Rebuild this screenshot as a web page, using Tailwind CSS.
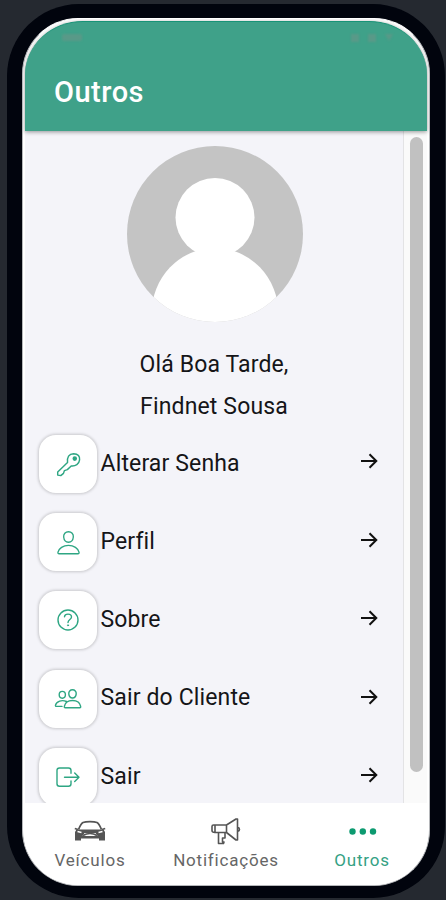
<!DOCTYPE html>
<html lang="pt">
<head>
<meta charset="utf-8">
<title>Outros</title>
<script src="https://cdn.jsdelivr.net/npm/@tailwindcss/browser@4"></script>
</head>
<body class="w-[446px] h-[900px] overflow-hidden bg-[#252930] font-['Roboto','Liberation_Sans',sans-serif]">
<div class="ml-[7px] pt-[4px]">
<div class="w-[438px] h-[894px] rounded-[72px] bg-[#01040d] pt-[14px] pl-[15px]">
<div class="w-[408px] h-[868px] rounded-[56px] bg-white border border-[#b5b7ba] border-t-white overflow-hidden pl-[2px] pr-[2px] pt-[2px] flex flex-col">
  <header class="relative z-10 h-[110px] shrink-0 bg-[#3fa189] border-t border-[#189377] rounded-tl-[58px_54px] rounded-tr-[58px_54px] shadow-[0_1px_4px_rgba(0,0,0,0.4)] flex flex-col">
    <div class="h-[30px] pt-[12px] pl-[37px] pr-[34px] flex justify-between items-start">
      <span class="w-[20px] h-[7px] rounded-[2px] bg-[#6b9487]/60 blur-[1px]"></span>
      <span class="flex gap-[9px] blur-[1px]">
        <span class="w-[8px] h-[8px] bg-[#6b9487]/60"></span>
        <span class="w-[8px] h-[8px] bg-[#6b9487]/60"></span>
        <span class="w-[8px] h-[7px] bg-[#6b9487]/60 [clip-path:polygon(0_0,100%_0,50%_100%)]"></span>
      </span>
    </div>
    <h1 class="pl-[29px] pt-[23px] text-[29px] leading-[34px] tracking-[0.5px] font-medium text-white whitespace-nowrap">Outros</h1>
  </header>
  <div class="h-[672px] shrink-0 flex bg-[#f4f4f9] overflow-hidden">
    <main class="w-[378px] shrink-0 text-[#151518] text-[23px] tracking-[0.14px]">
      <div class="flex flex-col items-center pt-[15px]">
        <svg class="w-[176px] h-[176px] ml-[2px]" viewBox="0 0 176 176">
          <clipPath id="c"><circle cx="88" cy="88" r="88"/></clipPath>
          <g clip-path="url(#c)"><rect width="176" height="176" fill="#c4c4c4"/><circle cx="88" cy="71.500" r="39.500" fill="#fff"/><ellipse cx="88" cy="168" rx="63.500" ry="66" fill="#fff"/></g>
        </svg>
        <p class="mt-[22px] leading-[42px] whitespace-nowrap">Olá Boa Tarde,</p>
        <p class="leading-[42px] whitespace-nowrap">Findnet Sousa</p>
      </div>
      <ul class="pt-[7px] pl-[14px] pr-[25px] flex flex-col gap-[20.2px]">
        <li class="flex items-center h-[58px]">
          <span class="w-[58px] h-[58px] rounded-[17px] bg-white shadow-[0_0_3px_1px_rgba(0,0,0,0.18)] flex items-center justify-center"><svg class="w-[27px] h-[27px]" viewBox="0 0 28 28" fill="none" stroke="#2ea683" stroke-width="1.500" stroke-linejoin="round"><path d="M13 12C12.300 6.500 14.500 3 19.300 2.800C24 2.800 26 5.500 25.500 9.300C25 13.500 21.300 16 16.800 15.500L12.800 19.300L9.800 20.300L8.800 23.200L6 25.500L2.800 25L2.800 21.800Z"/><circle cx="20.500" cy="7.900" r="1.600" fill="#2ea683"/></svg></span>
          <span class="ml-[3.500px] flex-1 whitespace-nowrap">Alterar Senha</span>
          <svg class="w-[18px] h-[18px] relative -top-[3px]" viewBox="0 0 18 18" fill="none" stroke="#111" stroke-width="2"><path d="M1 9H16M9.500 2.200L16.300 9L9.500 15.800"/></svg>
        </li>
        <li class="flex items-center h-[58px]">
          <span class="w-[58px] h-[58px] rounded-[17px] bg-white shadow-[0_0_3px_1px_rgba(0,0,0,0.18)] flex items-center justify-center"><svg class="w-[27px] h-[27px]" viewBox="0 0 28 28" fill="none" stroke="#2ea683" stroke-width="1.400" stroke-linejoin="round"><path d="M14 2.800C17.200 2.800 19.300 5.300 19 8.300C18.700 11.400 16.600 13.700 14 13.700C11.400 13.700 9.300 11.400 9 8.300C8.700 5.300 10.800 2.800 14 2.800Z"/><path d="M14 17C8.500 17 4 20 3.100 24C2.900 25 3.300 25.700 4.200 25.700H23.800C24.700 25.700 25.100 25 24.900 24C24 20 19.500 17 14 17Z"/></svg></span>
          <span class="ml-[3.500px] flex-1 whitespace-nowrap">Perfil</span>
          <svg class="w-[18px] h-[18px] relative -top-[2px]" viewBox="0 0 18 18" fill="none" stroke="#111" stroke-width="2"><path d="M1 9H16M9.500 2.200L16.300 9L9.500 15.800"/></svg>
        </li>
        <li class="flex items-center h-[58px]">
          <span class="w-[58px] h-[58px] rounded-[17px] bg-white shadow-[0_0_3px_1px_rgba(0,0,0,0.18)] flex items-center justify-center"><svg class="w-[28px] h-[28px]" viewBox="0 0 28 28" fill="none" stroke="#2ea683" stroke-width="1.400" stroke-linecap="round"><circle cx="14" cy="14" r="10"/><path d="M10.500 10.700C10.700 8.800 12.200 8.100 14 8.100C16 8.100 17.500 9.300 17.500 11C17.500 13.600 14 13.500 14 16.500"/><circle cx="14" cy="19.300" r=".6" fill="#2ea683" stroke-width=".8"/></svg></span>
          <span class="ml-[3.500px] flex-1 whitespace-nowrap">Sobre</span>
          <svg class="w-[18px] h-[18px] relative -top-[2px]" viewBox="0 0 18 18" fill="none" stroke="#111" stroke-width="2"><path d="M1 9H16M9.500 2.200L16.300 9L9.500 15.800"/></svg>
        </li>
        <li class="flex items-center h-[58px]">
          <span class="w-[58px] h-[58px] rounded-[17px] bg-white shadow-[0_0_3px_1px_rgba(0,0,0,0.18)] flex items-center justify-center"><svg class="w-[28px] h-[28px]" viewBox="0 0 28 28" fill="none" stroke="#2ea683" stroke-width="1.400" stroke-linejoin="round" stroke-linecap="round"><path d="M18.500 4.800C20.800 4.800 22.400 6.500 22.200 8.900C22 11.300 20.400 13 18.500 13C16.600 13 15 11.300 14.800 8.900C14.600 6.500 16.200 4.800 18.500 4.800Z"/><path d="M18.500 15.500C14.500 15.500 11 17.700 10.300 21.500C10.100 22.300 10.500 22.800 11.200 22.800H25.800C26.500 22.800 26.900 22.300 26.700 21.500C26 17.700 22.500 15.500 18.500 15.500Z"/><ellipse cx="8.300" cy="9.800" rx="3.100" ry="3.400"/><path d="M12.500 16.500C8 14.600 2.500 16 1.500 20.200C1.300 21 1.700 21.400 2.300 21.400H8"/></svg></span>
          <span class="ml-[3.500px] flex-1 whitespace-nowrap">Sair do Cliente</span>
          <svg class="w-[18px] h-[18px] relative -top-[2px]" viewBox="0 0 18 18" fill="none" stroke="#111" stroke-width="2"><path d="M1 9H16M9.500 2.200L16.300 9L9.500 15.800"/></svg>
        </li>
        <li class="flex items-center h-[58px]">
          <span class="w-[58px] h-[58px] rounded-[17px] bg-white shadow-[0_0_3px_1px_rgba(0,0,0,0.18)] flex items-center justify-center"><svg class="w-[28px] h-[28px]" viewBox="0 0 28 28" fill="none" stroke="#2ea683" stroke-width="1.400" stroke-linejoin="round" stroke-linecap="round"><path d="M17 10.300V7.500C17 6 16 5 14.500 5H5.500C4 5 3 6 3 7.500V20.800C3 22.300 4 23.300 5.500 23.300H14.500C16 23.300 17 22.300 17 20.800V18"/><path d="M10.500 14.200H25M20.700 9.900L25 14.200L20.700 18.500"/></svg></span>
          <span class="ml-[3.500px] flex-1 whitespace-nowrap">Sair</span>
          <svg class="w-[18px] h-[18px] relative -top-[2px]" viewBox="0 0 18 18" fill="none" stroke="#111" stroke-width="2"><path d="M1 9H16M9.500 2.200L16.300 9L9.500 15.800"/></svg>
        </li>
      </ul>
    </main>
    <aside class="flex-1 bg-[#fafafa] border-l border-[#e3e3e5] pt-[6px] pl-[6px]"><div class="w-[13px] h-[635px] rounded-full bg-[#c1c1c1]"></div></aside>
  </div>
  <nav class="flex-1 bg-white flex text-[17px] leading-[20px] tracking-[0.8px] text-[#666]">
    <div class="w-[130px] flex flex-col items-center pt-[14px]">
      <svg class="w-[32px] h-[28px]" viewBox="0 0 32 28" fill="none" stroke="#555" stroke-width="1.700" stroke-linejoin="round"><path d="M4.500 12.500C6 9 7 6.500 9 5.500C12 4.300 20 4.300 23 5.500C25 6.500 26 9 27.500 12.500"/><path d="M2.500 12.500H29.500L31 15V23.500H25V21.500H7V23.500H1V15ZM8.500 19H23.500L21.500 16H10.500Z" fill="#555" fill-rule="evenodd" stroke="none"/><path d="M3.500 14.500L7.500 15.500M28.500 14.500L24.500 15.500" stroke="#fff" stroke-width="1.300"/><path d="M.8 11.500L4 12.500M31.200 11.500L28 12.500M9 18.500Q16 14.500 23 18.500"/></svg>
      <span class="whitespace-nowrap mt-[5px]">Veículos</span>
    </div>
    <div class="w-[142px] flex flex-col items-center pt-[14px]">
      <svg class="w-[32px] h-[28px]" viewBox="0 0 32 28" fill="none" stroke="#555" stroke-width="1.600" stroke-linejoin="round"><path d="M5 8H16.500V15.500H5ZM5 8H3.500Q2 8 2 9.500V13.500Q2 15.500 5 15.500M16.500 8L26 2H27.500V23H26L16.500 15.500M27.500 10Q29.500 10.500 29.500 12.500Q29.500 14 27.500 14.500M8.500 15.500V26.500H13.500L14 25H12.500V21H15V15.500"/></svg>
      <span class="whitespace-nowrap mt-[5px]">Notificações</span>
    </div>
    <div class="flex-1 flex flex-col items-center pt-[14px] text-[#35a184]">
      <svg class="w-[32px] h-[28px]" viewBox="0 0 32 28" fill="#0c9a70"><circle cx="6.500" cy="14.500" r="3.200"/><circle cx="16.800" cy="14.500" r="3.200"/><circle cx="27" cy="14.500" r="3.200"/></svg>
      <span class="whitespace-nowrap mt-[5px]">Outros</span>
    </div>
  </nav>
</div>
</div>
</div>
</body>
</html>
